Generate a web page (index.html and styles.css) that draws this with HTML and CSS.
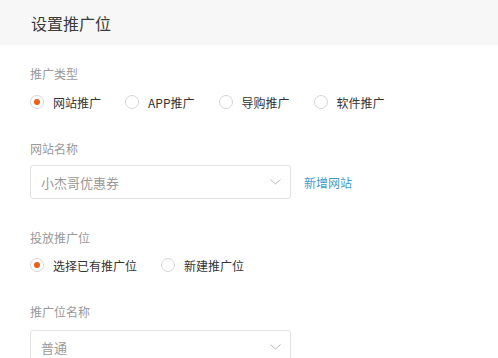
FILE: index.html
```html
<!DOCTYPE html>
<html lang="zh-CN">
<head>
<meta charset="utf-8">
<title>设置推广位</title>
<link rel="stylesheet" href="styles.css">
</head>
<body>
<div class="page">
  <div class="header"><span class="title">设置推广位</span></div>
  <div class="form">
    <div class="section s1">
      <div class="label">推广类型</div>
      <div class="radios">
        <label class="radio checked"><span class="dot"></span><span class="txt">网站推广</span></label>
        <label class="radio"><span class="dot"></span><span class="txt">APP推广</span></label>
        <label class="radio"><span class="dot"></span><span class="txt">导购推广</span></label>
        <label class="radio"><span class="dot"></span><span class="txt">软件推广</span></label>
      </div>
    </div>
    <div class="section s2">
      <div class="label">网站名称</div>
      <div class="select-row">
        <div class="select">
          <span class="value">小杰哥优惠券</span>
          <svg class="chev" width="11" height="6" viewBox="0 0 11 6"><path d="M0.5 0.5 L5.5 5 L10.5 0.5" fill="none" stroke="#b8b8b8" stroke-width="1"/></svg>
        </div>
        <a class="link">新增网站</a>
      </div>
    </div>
    <div class="section s3">
      <div class="label">投放推广位</div>
      <div class="radios">
        <label class="radio checked"><span class="dot"></span><span class="txt">选择已有推广位</span></label>
        <label class="radio"><span class="dot"></span><span class="txt">新建推广位</span></label>
      </div>
    </div>
    <div class="section s4">
      <div class="label">推广位名称</div>
      <div class="select-row">
        <div class="select">
          <span class="value">普通</span>
          <svg class="chev" width="11" height="6" viewBox="0 0 11 6"><path d="M0.5 0.5 L5.5 5 L10.5 0.5" fill="none" stroke="#b8b8b8" stroke-width="1"/></svg>
        </div>
      </div>
    </div>
  </div>
</div>
</body>
</html>
```

FILE: styles.css
```css
* { box-sizing: border-box; }
html, body { margin: 0; padding: 0; background: #fff; }
body {
  font-family: "Noto Sans CJK SC", "Noto Sans", sans-serif;
  color: #333;
  overflow: hidden;
}
.header {
  display: flex;
  align-items: center;
  height: 45px;
  background: #f7f7f7;
  padding: 0 0 0 31px;
}
.title {
  font-size: 16px;
  line-height: 22px;
  color: #3a3a3a;
}
.form { padding-left: 30px; }
.label {
  font-size: 12px;
  line-height: 20px;
  color: #999;
}
.s1 { margin-top: 19px; }
.s2 { margin-top: 27px; }
.s3 { margin-top: 29px; }
.s4 { margin-top: 27px; }
.radios {
  display: flex;
  margin-top: 8px;
  height: 20px;
  align-items: center;
}
.s3 .radios { margin-top: 7px; }
.radio {
  display: flex;
  align-items: center;
  margin-right: 24px;
  font-size: 12px;
  color: #333;
}
.dot {
  width: 14px;
  height: 14px;
  border: 1px solid #d6d6d6;
  border-radius: 50%;
  margin-right: 9px;
  display: flex;
  align-items: center;
  justify-content: center;
  background: #fff;
}
.radio.checked .dot::after {
  content: "";
  width: 6px;
  height: 6px;
  border-radius: 50%;
  background: #e8601c;
}
.select-row {
  display: flex;
  align-items: center;
  margin-top: 6px;
}
.s4 .select-row { margin-top: 8px; }
.select {
  width: 261px;
  height: 34px;
  border: 1px solid #e3e3e3;
  border-radius: 3px;
  display: flex;
  align-items: center;
  justify-content: space-between;
  padding: 0 9px 0 10px;
  font-size: 13px;
  color: #999;
}
.chev { display: block; }
.link {
  margin-left: 13px;
  font-size: 12px;
  color: #3f9cc9;
}
```
